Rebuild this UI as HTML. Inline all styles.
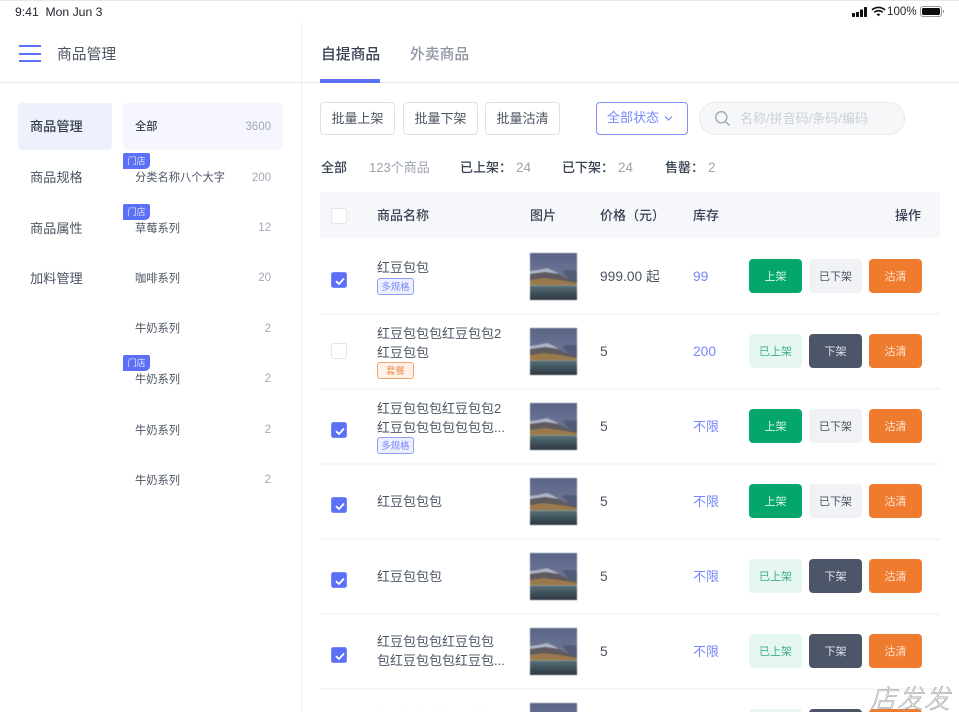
<!DOCTYPE html>
<html lang="zh-CN">
<head>
<meta charset="utf-8">
<title>商品管理</title>
<style>
*{box-sizing:border-box;margin:0;padding:0}
html,body{width:959px;height:720px;overflow:hidden;background:#fff}
body{font-family:"Liberation Sans","Noto Sans CJK SC",sans-serif;color:#4b5563;position:relative}
#p{position:absolute;left:0;top:0;width:959px;height:720px;overflow:hidden;filter:blur(.3px)}
.a,.t,.b,.ck,.pic,.tag,.mt{position:absolute}
.t{white-space:nowrap;font-size:13px;line-height:20px;height:20px;margin-top:1px}
.s{font-weight:500;color:#374151}
.g{color:#9ca3af}
.bl{color:#7787fb}
.n{font-size:13.8px;margin-top:2px}
.nav{left:30px;font-size:13.2px}
.sub{left:135px;font-size:11.25px}
.cnt{right:688px;font-size:11.5px;color:#a3a8b4}
.mt{left:123px;width:27px;height:16px;background:#5b70f6;color:#dfe4ff;font-size:9px;line-height:16px;text-align:center;border-radius:2px 2px 5px 0}
.b{top:0;width:53px;height:34px;border-radius:4px;font-size:11px;line-height:36px;text-align:center}
.up{background:#05a66b;color:#d9f5ea}
.off{background:#f1f2f5;color:#4b5563}
.upd{background:#e6f7f1;color:#3fae85}
.dn{background:#4d5668;color:#dfe2e8}
.cl{background:#ef7b2e;color:#ffe6d5}
.ck{left:331px;width:16px;height:16px;border-radius:2.5px;border:1px solid #e2e4e9;background:#fff}
.ck.on{background:#5b70f6;border-color:#7686f7}
.ck svg{position:absolute;left:1px;top:1px}
.pic{left:530px;width:47px;height:47px;filter:blur(.5px)}
.tag{left:377px;width:37px;height:17px;border-radius:3px;font-size:9.4px;line-height:15px;text-align:center;border:1px solid #8f9dfb;background:#eef0ff;color:#7787fb}
.tag.o{border-color:#f4a66f;background:#fdf1e8;color:#ee8d4f}
.sep{position:absolute;left:320px;width:620px;height:2px;background:#f5f6f7}
.bb{position:absolute;top:102px;width:75px;height:33px;border:1px solid #dfe1e6;border-radius:4px;font-size:13px;line-height:31px;text-align:center;color:#4b5563}
</style>
</head>
<body>
<div id="p">
<svg width="0" height="0" style="position:absolute">
<defs>
<linearGradient id="sky" x1="0" y1="0" x2="0" y2="1"><stop offset="0" stop-color="#5a6586"/><stop offset=".45" stop-color="#6c7493"/><stop offset="1" stop-color="#4e5a7a"/></linearGradient>
<linearGradient id="wat" x1="0" y1="0" x2="0" y2="1"><stop offset="0" stop-color="#56707a"/><stop offset=".5" stop-color="#3f525b"/><stop offset="1" stop-color="#2f3642"/></linearGradient>
<symbol id="im" viewBox="0 0 47 47">
<rect width="47" height="47" fill="url(#sky)"/>
<path d="M32 18 C38 16 43 17 47 18 V30 L38 25Z" fill="#4c5672" opacity=".8"/>
<path d="M0 18 L8 17 L17 15 L24 18 L34 24 L47 29 V33 H0Z" fill="#5f5a5e"/>
<path d="M0 18 L8 17 L17 15 L24 18 L29 21 L22 20 L15 19 L8 20 L0 21Z" fill="#aeb4c8"/>
<path d="M0 27 L14 25 L30 27 L47 30 V33 H0Z" fill="#9a7a4c"/>
<rect y="32" width="47" height="1.5" fill="#8f9288"/>
<rect y="33" width="47" height="14" fill="url(#wat)"/>
</symbol>
</defs>
</svg>

<!-- status bar -->
<div class="a" style="left:0;top:0;width:959px;height:1px;background:#e5e7eb"></div>
<div class="t" style="left:15px;top:1px;font-size:12.2px;color:#1f2229">9:41&nbsp;&nbsp;Mon Jun 3</div>
<svg class="a" style="left:851px;top:7px" width="17" height="10"><rect x="1" y="6" width="3" height="4" rx=".6" fill="#111"/><rect x="5" y="5" width="3" height="5" rx=".6" fill="#111"/><rect x="9" y="2.5" width="3" height="7.5" rx=".6" fill="#111"/><rect x="13" y="0" width="3" height="10" rx=".6" fill="#111"/></svg>
<svg class="a" style="left:871px;top:6px" width="15" height="11" viewBox="0 0 15 11"><path d="M1 4 C4.5 .6 10.5 .6 14 4" fill="none" stroke="#111" stroke-width="1.6"/><path d="M3.3 6.3 C5.6 4.2 9.4 4.2 11.7 6.3" fill="none" stroke="#111" stroke-width="1.6"/><path d="M5.6 8.3 C6.7 7.4 8.3 7.4 9.4 8.3 L7.5 10.4Z" fill="#111"/></svg>
<div class="t" style="left:887px;top:1px;font-size:11.6px;color:#1f2229">100%</div>
<div class="a" style="left:920px;top:6px;width:22px;height:11px;border:1px solid #999;border-radius:3px;padding:1px"><div style="width:100%;height:100%;background:#0c0c0c;border-radius:1.5px"></div></div>
<div class="a" style="left:942.5px;top:10px;width:1px;height:3px;background:#999"></div>

<!-- frame lines -->
<div class="a" style="left:0;top:82px;width:959px;height:1px;background:#e9ebef"></div>
<div class="a" style="left:301px;top:23px;width:1px;height:697px;background:#eceef2"></div>

<!-- left header -->
<div class="a" style="left:19px;top:45px;width:22px;height:2px;background:#5b70f6"></div>
<div class="a" style="left:19px;top:52.5px;width:22px;height:2px;background:#5b70f6"></div>
<div class="a" style="left:19px;top:60px;width:22px;height:2px;background:#5b70f6"></div>
<div class="t" style="left:57px;top:44px;font-size:14.8px;color:#4b5563">商品管理</div>

<!-- nav -->
<div class="a" style="left:18px;top:103px;width:94px;height:47px;background:#eef0fb;border-radius:4px"></div>
<div class="a" style="left:123px;top:103px;width:160px;height:47px;background:#f6f7fe;border-radius:4px"></div>
<div class="t nav s" style="top:116px">商品管理</div>
<div class="t nav" style="top:167px">商品规格</div>
<div class="t nav" style="top:218px">商品属性</div>
<div class="t nav" style="top:268px">加料管理</div>

<div class="t sub s" style="top:116px">全部</div><div class="t cnt g" style="top:116px">3600</div>
<div class="mt" style="top:153px">门店</div>
<div class="t sub" style="top:167px">分类名称八个大字</div><div class="t cnt" style="top:167px">200</div>
<div class="mt" style="top:204px">门店</div>
<div class="t sub" style="top:218px">草莓系列</div><div class="t cnt" style="top:217px">12</div>
<div class="t sub" style="top:268px">咖啡系列</div><div class="t cnt" style="top:267px">20</div>
<div class="t sub" style="top:318px">牛奶系列</div><div class="t cnt" style="top:318px">2</div>
<div class="mt" style="top:355px">门店</div>
<div class="t sub" style="top:369px">牛奶系列</div><div class="t cnt" style="top:368px">2</div>
<div class="t sub" style="top:420px">牛奶系列</div><div class="t cnt" style="top:419px">2</div>
<div class="t sub" style="top:470px">牛奶系列</div><div class="t cnt" style="top:469px">2</div>

<!-- tabs -->
<div class="t s" style="left:321px;top:44px;font-size:14.8px">自提商品</div>
<div class="t" style="left:410px;top:44px;font-size:14.8px;color:#8f95a3;font-weight:500">外卖商品</div>
<div class="a" style="left:320px;top:79px;width:60px;height:4px;background:#5b70f6"></div>

<!-- toolbar -->
<div class="bb" style="left:320px">批量上架</div>
<div class="bb" style="left:403px">批量下架</div>
<div class="bb" style="left:485px">批量沽清</div>
<div class="a" style="left:596px;top:102px;width:92px;height:33px;border:1px solid #7f90fb;border-radius:4px"></div>
<div class="t bl" style="left:607px;top:107px">全部状态</div>
<svg class="a" style="left:664px;top:115px" width="9" height="7"><path d="M1 1.5 L4.5 5 L8 1.5" fill="none" stroke="#7787fb" stroke-width="1.2"/></svg>
<div class="a" style="left:699px;top:102px;width:206px;height:33px;border:1px solid #e8e9ed;border-radius:17px;background:#f6f7f9"></div>
<svg class="a" style="left:714px;top:110px" width="17" height="17" viewBox="0 0 17 17"><circle cx="7.3" cy="7.3" r="5.6" fill="none" stroke="#9ea3ae" stroke-width="1.3"/><path d="M11.5 11.5 L15.5 15.5" stroke="#9ea3ae" stroke-width="1.3" fill="none"/></svg>
<div class="t" style="left:740px;top:108px;color:#ccd0d6">名称/拼音码/条码/编码</div>

<!-- stats -->
<div class="t s" style="left:321px;top:157px">全部</div>
<div class="t g" style="left:369px;top:157px">123个商品</div>
<div class="t s" style="left:460px;top:157px">已上架：</div><div class="t g" style="left:516px;top:157px;font-size:13.5px">24</div>
<div class="t s" style="left:562px;top:157px">已下架：</div><div class="t g" style="left:618px;top:157px;font-size:13.5px">24</div>
<div class="t s" style="left:665px;top:157px">售罄：</div><div class="t g" style="left:708px;top:157px;font-size:13.5px">2</div>

<!-- table header -->
<div class="a" style="left:320px;top:192px;width:620px;height:46px;background:#f6f7fb"></div>
<div class="ck" style="top:208px"></div>
<div class="t s" style="left:377px;top:205px">商品名称</div>
<div class="t s" style="left:530px;top:205px">图片</div>
<div class="t s" style="left:600px;top:205px">价格（元）</div>
<div class="t s" style="left:693px;top:205px">库存</div>
<div class="t s" style="left:895px;top:205px">操作</div>

<!-- row 1 -->
<div class="ck on" style="top:272px"><svg width="14" height="14"><path d="M3 7.2 L6 10 L11 4.5" fill="none" stroke="#fff" stroke-width="1.8"/></svg></div>
<div class="t" style="left:377px;top:257px">红豆包包</div>
<div class="tag" style="top:278px">多规格</div>
<svg class="pic" style="top:253px"><use href="#im"/></svg>
<div class="t n" style="left:600px;top:265px">999.00 起</div>
<div class="t bl n" style="left:693px;top:265px">99</div>
<div class="b up" style="left:749px;top:259px">上架</div><div class="b off" style="left:809px;top:259px">已下架</div><div class="b cl" style="left:869px;top:259px">沽清</div>
<div class="sep" style="top:313px"></div>

<!-- row 2 -->
<div class="ck" style="top:343px"></div>
<div class="t" style="left:377px;top:323px">红豆包包包红豆包包2</div>
<div class="t" style="left:377px;top:342px">红豆包包</div>
<div class="tag o" style="top:362px">套餐</div>
<svg class="pic" style="top:328px"><use href="#im"/></svg>
<div class="t n" style="left:600px;top:340px">5</div>
<div class="t bl n" style="left:693px;top:340px">200</div>
<div class="b upd" style="left:749px;top:334px">已上架</div><div class="b dn" style="left:809px;top:334px">下架</div><div class="b cl" style="left:869px;top:334px">沽清</div>
<div class="sep" style="top:388px"></div>

<!-- row 3 -->
<div class="ck on" style="top:422px"><svg width="14" height="14"><path d="M3 7.2 L6 10 L11 4.5" fill="none" stroke="#fff" stroke-width="1.8"/></svg></div>
<div class="t" style="left:377px;top:398px">红豆包包包红豆包包2</div>
<div class="t" style="left:377px;top:417px">红豆包包包包包包包...</div>
<div class="tag" style="top:437px">多规格</div>
<svg class="pic" style="top:403px"><use href="#im"/></svg>
<div class="t n" style="left:600px;top:415px">5</div>
<div class="t bl" style="left:693px;top:416px">不限</div>
<div class="b up" style="left:749px;top:409px">上架</div><div class="b off" style="left:809px;top:409px">已下架</div><div class="b cl" style="left:869px;top:409px">沽清</div>
<div class="sep" style="top:463px"></div>

<!-- row 4 -->
<div class="ck on" style="top:497px"><svg width="14" height="14"><path d="M3 7.2 L6 10 L11 4.5" fill="none" stroke="#fff" stroke-width="1.8"/></svg></div>
<div class="t" style="left:377px;top:491px">红豆包包包</div>
<svg class="pic" style="top:478px"><use href="#im"/></svg>
<div class="t n" style="left:600px;top:490px">5</div>
<div class="t bl" style="left:693px;top:491px">不限</div>
<div class="b up" style="left:749px;top:484px">上架</div><div class="b off" style="left:809px;top:484px">已下架</div><div class="b cl" style="left:869px;top:484px">沽清</div>
<div class="sep" style="top:538px"></div>

<!-- row 5 -->
<div class="ck on" style="top:572px"><svg width="14" height="14"><path d="M3 7.2 L6 10 L11 4.5" fill="none" stroke="#fff" stroke-width="1.8"/></svg></div>
<div class="t" style="left:377px;top:566px">红豆包包包</div>
<svg class="pic" style="top:553px"><use href="#im"/></svg>
<div class="t n" style="left:600px;top:565px">5</div>
<div class="t bl" style="left:693px;top:566px">不限</div>
<div class="b upd" style="left:749px;top:559px">已上架</div><div class="b dn" style="left:809px;top:559px">下架</div><div class="b cl" style="left:869px;top:559px">沽清</div>
<div class="sep" style="top:613px"></div>

<!-- row 6 -->
<div class="ck on" style="top:647px"><svg width="14" height="14"><path d="M3 7.2 L6 10 L11 4.5" fill="none" stroke="#fff" stroke-width="1.8"/></svg></div>
<div class="t" style="left:377px;top:631px">红豆包包包红豆包包</div>
<div class="t" style="left:377px;top:650px">包红豆包包包红豆包...</div>
<svg class="pic" style="top:628px"><use href="#im"/></svg>
<div class="t n" style="left:600px;top:640px">5</div>
<div class="t bl" style="left:693px;top:641px">不限</div>
<div class="b upd" style="left:749px;top:634px">已上架</div><div class="b dn" style="left:809px;top:634px">下架</div><div class="b cl" style="left:869px;top:634px">沽清</div>
<div class="sep" style="top:688px"></div>

<!-- row 7 (clipped) -->
<div class="t" style="left:377px;top:708px">红豆包包包红豆包包</div>
<svg class="pic" style="top:703px"><use href="#im"/></svg>
<div class="b upd" style="left:749px;top:709px">已上架</div><div class="b dn" style="left:809px;top:709px">下架</div><div class="b cl" style="left:869px;top:709px">沽清</div>

<!-- bottom cover -->
<div class="a" style="left:0;top:712px;width:959px;height:8px;background:#fff"></div>
<div class="t" style="left:870px;top:683px;height:30px;line-height:30px;font-size:26px;font-style:italic;font-weight:300;color:#fff;-webkit-text-stroke:.5px #8a8e95;letter-spacing:1px">店发发</div>
</div>
</body>
</html>
